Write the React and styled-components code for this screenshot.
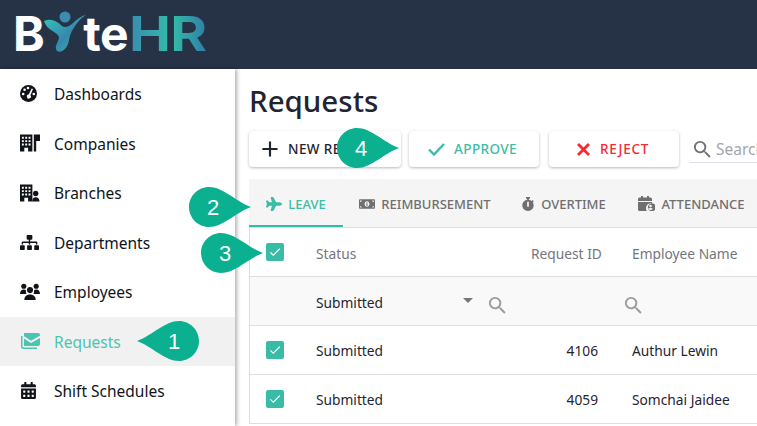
import React from "react";
import styled, { createGlobalStyle } from "styled-components";
import { FaSitemap, FaCalendarAlt, FaPlane, FaMoneyBillAlt, FaStopwatch } from "react-icons/fa";
import { MdAdd, MdCheck, MdSearch } from "react-icons/md";

const Global = createGlobalStyle`
  html, body { margin: 0; padding: 0; height: 100%; background: #fff; overflow: hidden; }
  body { font-family: "Noto Sans", "Open Sans", sans-serif; color: #1f2430; }
  #root { height: 100%; }
`;

const Page = styled.div`
  position: relative;
  width: 757px;
  height: 426px;
  overflow: hidden;
  display: flex;
  flex-direction: column;
`;
const Header = styled.header`
  flex: 0 0 69px;
  height: 69px;
  background: #263346;
  display: flex;
  align-items: flex-start;
  padding: 9px 0 0 13px;
  box-sizing: border-box;
`;
const Logo = styled.div`
  display: flex;
  align-items: center;
  height: 50px;
  font-family: "Inter", "Liberation Sans", sans-serif;
  font-weight: 700;
  font-size: 48px;
  line-height: 50px;
  letter-spacing: -0.5px;
`;
const LogoWhite = styled.span`
  color: #fff;
`;
const LogoHR = styled.span`
  display: inline-block;
  background: linear-gradient(90deg, #3a8aae 0%, #34bca8 55%, #2f7fa6 100%);
  -webkit-background-clip: text;
  background-clip: text;
  color: transparent;
  margin-left: 1px;
  transform: scaleX(1.17);
  transform-origin: left center;
`;
const Figure = styled.svg`
  flex: 0 0 44px;
  margin: -5px -4px 0 -1px;
`;
const Body = styled.div`
  flex: 1;
  display: flex;
  min-height: 0;
`;
const Sidebar = styled.nav`
  flex: 0 0 235px;
  width: 235px;
  background: #fff;
  box-shadow: 2px 0 4px rgba(0, 0, 0, 0.3);
  z-index: 1;
  display: flex;
  flex-direction: column;
`;
const NavRow = styled.div`
  flex: 0 0 49.5px;
  height: 49.5px;
  display: flex;
  align-items: center;
  padding-left: 20px;
  gap: 14px;
  font-size: 15.5px;
  color: ${(p) => (p.$active ? "#4cc5b0" : "#10131a")};
  background: ${(p) => (p.$active ? "#f1f1f1" : "transparent")};
`;
const NavIcon = styled.span`
  width: 20px;
  height: 18px;
  display: flex;
  align-items: center;
  justify-content: flex-start;
  color: inherit;
`;
const NavLabel = styled.span`
  padding-top: 1px;
  white-space: nowrap;
`;
const Main = styled.main`
  flex: 1;
  min-width: 0;
  padding-left: 14px;
  display: flex;
  flex-direction: column;
`;
const Title = styled.h1`
  margin: 12px 0 0;
  font-size: 29.5px;
  line-height: 40px;
  font-weight: 500;
  color: #1f2430;
  height: 50px;
`;
const Toolbar = styled.div`
  display: flex;
  align-items: center;
  height: 36px;
  gap: 8px;
  white-space: nowrap;
`;
const Btn = styled.button`
  flex: 0 0 ${(p) => p.$w}px;
  width: ${(p) => p.$w}px;
  height: 36px;
  margin-right: ${(p) => p.$mr || 0}px;
  box-sizing: border-box;
  border: 0;
  border-radius: 4px;
  background: #fff;
  box-shadow: 0 1px 3px rgba(0, 0, 0, 0.28);
  display: flex;
  align-items: center;
  justify-content: flex-start;
  padding: 0 0 0 ${(p) => p.$pl}px;
  gap: ${(p) => p.$gap}px;
  font-family: inherit;
  font-size: 13.5px;
  font-weight: 500;
  letter-spacing: ${(p) => p.$ls || 0.4}px;
  overflow: hidden;
  color: ${(p) => p.$color};
`;
const Search = styled.div`
  flex: 0 0 auto;
  margin: 0 0 2px 2px;
  width: 80px;
  height: 26px;
  padding: 3px 0 0 2px;
  border-bottom: 1px solid #dde0e6;
  display: flex;
  align-items: center;
  gap: 2px;
  color: #a3a6ab;
  font-size: 15.5px;
  box-sizing: content-box;
  overflow: hidden;
`;
const Tabs = styled.div`
  margin-top: 12px;
  height: 48px;
  display: flex;
  background: #f5f5f5;
  border-bottom: 1px solid #dedede;
  white-space: nowrap;
`;
const Tab = styled.div`
  flex: 0 0 ${(p) => p.$w}px;
  width: ${(p) => p.$w}px;
  box-sizing: border-box;
  display: flex;
  align-items: center;
  justify-content: center;
  gap: 6px;
  padding: 3px 0 0 ${(p) => p.$pl || 0}px;
  font-size: 13px;
  font-weight: 500;
  color: ${(p) => (p.$active ? "#3dbda7" : "#6f6f70")};
  border-bottom: 2px solid ${(p) => (p.$active ? "#33bca4" : "transparent")};
`;
const Table = styled.div`
  border-left: 1px solid #dedede;
  display: flex;
  flex-direction: column;
`;
const TableRow = styled.div`
  display: grid;
  grid-template-columns: 50px 215px 101px 1fr;
  height: 48px;
  border-bottom: 1px solid #dedede;
  align-items: center;
  font-size: 13.75px;
  white-space: nowrap;
  background: ${(p) => (p.$filter ? "#f9f9f9" : "#fff")};
  color: ${(p) => (p.$head ? "#73767c" : "#1f2430")};
`;
const CheckCell = styled.div`
  padding-left: 16px;
  display: flex;
  align-items: center;
`;
const Check = styled.span`
  width: 18px;
  height: 18px;
  border-radius: 2px;
  background: #39bca6;
  color: #fff;
  display: flex;
  align-items: center;
  justify-content: center;
`;
const Cell = styled.div`
  padding: ${(p) => p.$pt}px ${(p) => (p.$right ? 18 : 16)}px 0 16px;
  text-align: ${(p) => (p.$right ? "right" : "left")};
`;
const FilterCell = styled.div`
  padding: 3px 6px 0 ${(p) => p.$pl}px;
  display: flex;
  align-items: center;
  color: #9b9b9b;
`;
const FilterText = styled.span`
  flex: 1;
  color: #1f2430;
`;
const Caret = styled.span`
  width: 0;
  height: 0;
  border-left: 5px solid transparent;
  border-right: 5px solid transparent;
  border-top: 5px solid #777;
  margin: 0 13px 4px 0;
`;
const FilterSearch = styled(MdSearch)`
  margin-top: 5px;
`;
const Callout = styled.div`
  position: absolute;
  left: ${(p) => p.$x}px;
  top: ${(p) => p.$y}px;
  width: 62px;
  height: 40px;
  z-index: 5;
`;
const CalloutShape = styled.svg`
  position: absolute;
  left: 0;
  top: 0;
  width: 100%;
  height: 100%;
`;
const CalloutNum = styled.span`
  position: absolute;
  top: 1px;
  ${(p) => (p.$left ? `right: 5px;` : `left: 4px;`)}
  width: 40px;
  height: 40px;
  line-height: 40px;
  text-align: center;
  color: #fff;
  font-family: "Liberation Sans", Arial, sans-serif;
  font-size: 22px;
`;

const DashIcon = () => (
  <svg width="17" height="17" viewBox="0 0 17 17">
    <circle cx="8.500" cy="8.500" r="8.500" fill="currentColor" />
    <g fill="#fff">
      <circle cx="3.200" cy="9" r="1.300" />
      <circle cx="4.600" cy="4.800" r="1.300" />
      <circle cx="8" cy="3" r="1.300" />
      <circle cx="13.800" cy="9" r="1.300" />
      <path d="M11.700 3.500l1.300.6-2.600 6.200a2 2 0 1 1-1.700-.7z" />
    </g>
  </svg>
);
const BuildingIcon = () => (
  <svg width="21" height="18" viewBox="0 0 21 18" fill="currentColor">
    <path fillRule="evenodd" d="M0 0h13v18H8.500v-4H4.500v4H0zM2 2.500v2h2v-2zM5.500 2.500v2h2v-2zM9 2.500v2h2v-2zM2 6v2h2V6zM5.500 6v2h2V6zM9 6v2h2V6zM2 9.500v2h2v-2zM5.500 9.500v2h2v-2zM9 9.500v2h2v-2z" />
    <path d="M14.500 0H21v7h-4v11h-2.500z" />
  </svg>
);
const BranchIcon = () => (
  <svg width="21" height="18" viewBox="0 0 21 18" fill="currentColor">
    <path fillRule="evenodd" d="M0 0h13v18H8.500v-4H4.500v4H0zM2 2.500v2h2v-2zM5.500 2.500v2h2v-2zM9 2.500v2h2v-2zM2 6v2h2V6zM5.500 6v2h2V6zM9 6v2h2V6zM2 9.500v2h2v-2zM5.500 9.500v2h2v-2zM9 9.500v2h2v-2z" />
    <circle cx="16.500" cy="9.500" r="2.800" />
    <path d="M12.800 18c0-3 1.500-4.500 3.700-4.500s4 1.500 4 4.500z" />
  </svg>
);
const PeopleIcon = () => (
  <svg width="21" height="18" viewBox="0 0 21 18" fill="currentColor">
    <circle cx="4" cy="3" r="2.700" />
    <circle cx="17" cy="3" r="2.700" />
    <circle cx="10.500" cy="7" r="3.200" />
    <path d="M0 11c0-3 2-4.500 4-4.500 1 0 1.800.3 2.400.8-.4 1.100-.2 2.400.6 3.400-.4.2-.8.3-1.200.3z" />
    <path d="M21 11c0-3-2-4.500-4-4.500-1 0-1.800.3-2.400.8.400 1.100.2 2.400-.6 3.400.4.2.8.3 1.200.3z" />
    <path d="M4.500 17.500c0-3.800 2.500-6 6-6s6 2.200 6 6z" />
  </svg>
);
const InboxIcon = () => (
  <svg width="20" height="16" viewBox="0 0 20 16" fill="currentColor">
    <path d="M4 0h14a2 2 0 0 1 2 2v.800l-9 5-7-4.500z" />
    <path d="M4 5.500l7 4.500 9-5V11a2 2 0 0 1-2 2H4z" />
    <path d="M2.500 3H1v10.500A2.500 2.500 0 0 0 3.500 16H17v-1.500H3.500a1 1 0 0 1-1-1z" />
  </svg>
);
const AttendanceIcon = () => (
  <svg width="17" height="15" viewBox="0 0 17 15" fill="currentColor">
    <path d="M3 0h2v1.500h4V0h2v1.500h1.500A1.500 1.500 0 0 1 14 3v2H0V3a1.500 1.500 0 0 1 1.500-1.500H3z" />
    <path d="M0 6h14v1.600A4.500 4.500 0 0 0 8 12c0 1 .2 2 .800 3H1.500A1.500 1.500 0 0 1 0 13.500z" />
    <path fillRule="evenodd" d="M12.500 7.500a4 4 0 1 1 0 7.500 4 4 0 0 1 0-7.500zm0 1.300a1.300 1.300 0 1 0 0 2.600 1.300 1.300 0 0 0 0-2.600zm0 3.200c-1 0-1.900.4-2.300 1a3 3 0 0 0 4.600 0c-.4-.6-1.300-1-2.300-1z" />
  </svg>
);
const ApproveIcon = () => (
  <svg width="17" height="13" viewBox="0 0 17 13" fill="none" stroke="currentColor" strokeWidth="2.400">
    <path d="M1 6.500l5 5L16 1" />
  </svg>
);
const RejectIcon = () => (
  <svg width="13" height="13" viewBox="0 0 13 13" fill="none" stroke="currentColor" strokeWidth="2.800">
    <path d="M1 1l11 11M12 1L1 12" />
  </svg>
);
const LogoFigure = () => (
  <Figure width="44" height="44" viewBox="44 9 44 44">
    <defs>
      <linearGradient id="fig" x1="0" y1="0" x2="1" y2="1">
        <stop offset="0" stopColor="#35c8b8" />
        <stop offset="0.55" stopColor="#3688ad" />
        <stop offset="1" stopColor="#36b6ae" />
      </linearGradient>
    </defs>
    <circle cx="66" cy="16" r="5.500" fill="#3a8db0" />
    <path d="M45 20C52 17 58 20 63 25 66 27 70 26 74 22 78 18 82 15 87 14 80 18 76 25 73 30 69 37 71 43 66 48 63 51 58 52 57 48 56 44 60 40 60 36 58 30 48 30 45 20z" fill="url(#fig)" />
  </Figure>
);

const CalloutPath = ({ dir }) => {
  const d = dir === "right"
    ? "M20 0C34 0 46 14 62 20 46 26 34 40 20 40 9 40 0 31 0 20S9 0 20 0z"
    : "M42 0C28 0 16 14 0 20 16 26 28 40 42 40 53 40 62 31 62 20S53 0 42 0z";
  return (
    <CalloutShape viewBox="0 0 62 40">
      <path d={d} fill="#0ab08f" />
    </CalloutShape>
  );
};

const nav = [
  ["Dashboards", <DashIcon />],
  ["Companies", <BuildingIcon />],
  ["Branches", <BranchIcon />],
  ["Departments", <FaSitemap size={19} />],
  ["Employees", <PeopleIcon />],
  ["Requests", <InboxIcon />, true],
  ["Shift Schedules", <FaCalendarAlt size={17} />],
];

const CheckBox = () => (
  <CheckCell>
    <Check><MdCheck size={14} /></Check>
  </CheckCell>
);

export default function App() {
  return (
    <Page>
      <Global />
      <Header>
        <Logo>
          <LogoWhite>B</LogoWhite>
          <LogoFigure />
          <LogoWhite>te</LogoWhite>
          <LogoHR>HR</LogoHR>
        </Logo>
      </Header>
      <Body>
        <Sidebar>
          {nav.map(([label, icon, active]) => (
            <NavRow key={label} $active={active}>
              <NavIcon>{icon}</NavIcon>
              <NavLabel>{label}</NavLabel>
            </NavRow>
          ))}
        </Sidebar>
        <Main>
          <Title>Requests</Title>
          <Toolbar>
            <Btn $w={152} $pl={8} $gap={5} $color="#1f2430"><MdAdd size={26} />NEW REQUEST</Btn>
            <Btn $w={130} $mr={2} $pl={19} $gap={9} $color="#3dbda7"><ApproveIcon />APPROVE</Btn>
            <Btn $w={130} $pl={28} $gap={10} $ls={0.8} $color="#f9272f"><RejectIcon />REJECT</Btn>
            <Search><MdSearch size={23} color="#6f7378" />Search</Search>
          </Toolbar>
          <Tabs>
            <Tab $w={94} $active><FaPlane size={16} />LEAVE</Tab>
            <Tab $w={164}><FaMoneyBillAlt size={16} />REIMBURSEMENT</Tab>
            <Tab $w={113}><FaStopwatch size={14} />OVERTIME</Tab>
            <Tab $w={137} $pl={6}><AttendanceIcon />ATTENDANCE</Tab>
          </Tabs>
          <Table>
            <TableRow $head>
              <CheckBox />
              <Cell $pt={3}>Status</Cell>
              <Cell $pt={3} $right>Request ID</Cell>
              <Cell $pt={3}>Employee Name</Cell>
            </TableRow>
            <TableRow $filter>
              <div />
              <FilterCell $pl={16}>
                <FilterText>Submitted</FilterText>
                <Caret />
                <FilterSearch size={23} />
              </FilterCell>
              <div />
              <FilterCell $pl={6}><FilterSearch size={23} /></FilterCell>
            </TableRow>
            <TableRow>
              <CheckBox />
              <Cell $pt={1}>Submitted</Cell>
              <Cell $pt={1} $right>4106</Cell>
              <Cell $pt={1}>Authur Lewin</Cell>
            </TableRow>
            <TableRow>
              <CheckBox />
              <Cell $pt={1}>Submitted</Cell>
              <Cell $pt={1} $right>4059</Cell>
              <Cell $pt={1}>Somchai Jaidee</Cell>
            </TableRow>
          </Table>
        </Main>
      </Body>
      <Callout $x={137} $y={321}><CalloutPath dir="left" /><CalloutNum $left>1</CalloutNum></Callout>
      <Callout $x={189} $y={187}><CalloutPath dir="right" /><CalloutNum>2</CalloutNum></Callout>
      <Callout $x={201} $y={233}><CalloutPath dir="right" /><CalloutNum>3</CalloutNum></Callout>
      <Callout $x={337} $y={128}><CalloutPath dir="right" /><CalloutNum>4</CalloutNum></Callout>
    </Page>
  );
}
